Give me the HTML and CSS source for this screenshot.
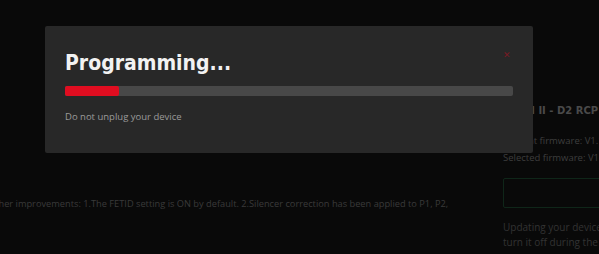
FILE: index.html
```html
<!DOCTYPE html>
<html lang="en">

<head>
  <meta charset="utf-8">
  <meta name="viewport" content="width=device-width, initial-scale=1">
  <title>Firmware update</title>
  <link rel="stylesheet" href="styles.css">
</head>

<body>
  <!-- Page behind the dialog -->
  <div class="page">
    <div class="notes">
      <p class="notes-text">Other improvements: 1.The FETID setting is ON by default. 2.Silencer correction has been applied to P1, P2,</p>
    </div>

    <div class="device">
      <h4 class="device-name">XRUN II - D2 RCP</h4>
      <p class="device-line">Current firmware: V1.1</p>
      <p class="device-line">Selected firmware: V1.2</p>
      <div class="device-action"></div>
      <p class="device-note">Updating your device may take a while, please do not turn it off during the process.</p>
    </div>
  </div>

  <!-- Programming dialog -->
  <div class="modal">
    <span class="modal-close">&#x2715;</span>
    <h2 class="modal-title">Programming...</h2>
    <div class="progress">
      <div class="progress-fill" style="width: 12%"></div>
    </div>
    <p class="modal-text">Do not unplug your device</p>
  </div>
</body>

</html>
```

FILE: styles.css
```css
/* Styling for the page */
body {
  margin: 0;
  background-color: #090909;
  font-family: "Open Sans", Arial, sans-serif;
  overflow: hidden;
}

p {
  margin: 0;
}

.page {
  display: flex;
  height: 254px;
  overflow: hidden;
  margin-left: -12px;
}

.notes {
  flex: none;
  width: 489px;
  padding-top: 197px;
}

.notes-text {
  font-size: 9.25px;
  color: #3a3a3a;
  white-space: nowrap;
}

.device {
  flex: none;
  width: 260px;
  padding-top: 105px;
  padding-left: 26px;
  white-space: nowrap;
}

.device-name {
  margin: 0 0 16px 0;
  font-family: "DejaVu Sans", sans-serif;
  font-size: 10px;
  font-weight: bold;
  color: #4a4a4a;
}

.device-line {
  font-size: 9.5px;
  line-height: 17px;
  color: #3e3e3e;
}

.device-action {
  width: 140px;
  height: 28px;
  margin: 12px 0 12px 0;
  border: 1px solid #0f2619;
  border-radius: 2px;
}

.device-note {
  font-size: 10px;
  line-height: 15px;
  color: #333;
  white-space: normal;
}

/* Dialog */
.modal {
  position: absolute;
  left: 45px;
  top: 26px;
  width: 448px;
  height: 127px;
  padding: 0 20px;
  box-sizing: content-box;
  background-color: #282828;
  border-radius: 2px;
}

.modal-close {
  position: absolute;
  right: 22px;
  top: 22px;
  font-size: 9px;
  color: #7a1a24;
}

.modal-title {
  margin: 25px 0 11px 0;
  font-family: "DejaVu Sans Condensed", "DejaVu Sans", sans-serif;
  font-stretch: condensed;
  font-size: 21px;
  font-weight: bold;
  color: #f2f2f2;
}

.progress {
  height: 10px;
  background-color: #484848;
  border-radius: 2px;
}

.progress-fill {
  height: 100%;
  background-color: #e00d20;
  border-radius: 2px;
}

.modal-text {
  margin-top: 14px;
  font-size: 9.5px;
  color: #9a9a9a;
}
```
